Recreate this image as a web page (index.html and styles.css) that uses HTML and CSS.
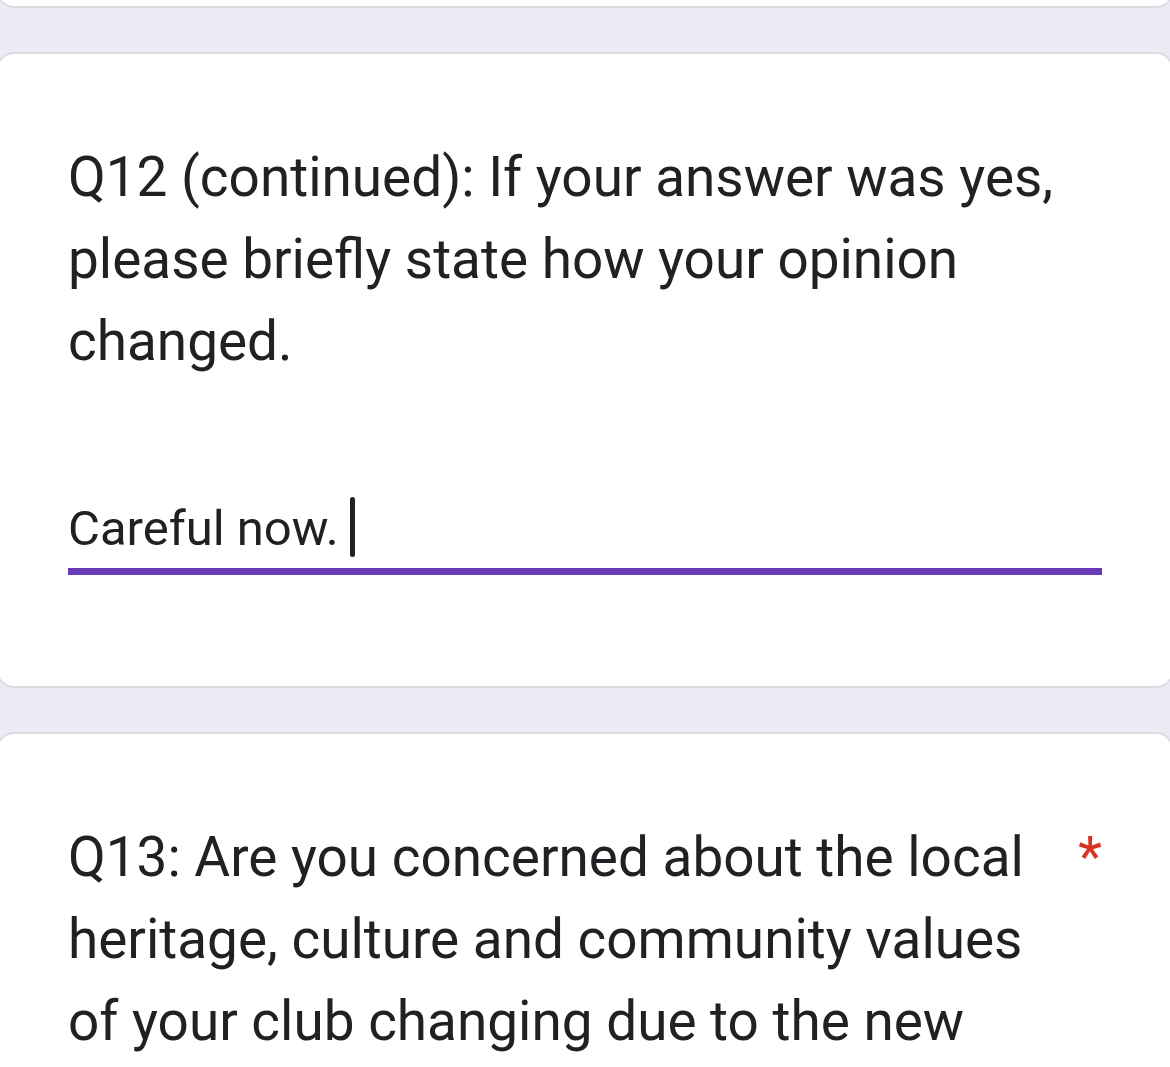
FILE: index.html
```html
<!DOCTYPE html>
<html>
<head>
<meta charset="utf-8">
<link rel="stylesheet" href="styles.css">
</head>
<body>
<div class="page">
  <div class="card card-stub"></div>
  <div class="card card-q12">
    <div class="title-row">
      <div class="title">Q12 (continued): If your answer was yes, please briefly state how your opinion changed.</div>
    </div>
    <div class="answer">
      <span class="answer-text">Careful now.</span><span class="caret"></span>
    </div>
    <div class="underline"></div>
  </div>
  <div class="card card-q13">
    <div class="title-row">
      <div class="title">Q13: Are you concerned about the local heritage, culture and community values of your club changing due to the new structure?</div>
      <span class="required">*</span>
    </div>
  </div>
</div>
</body>
</html>
```

FILE: styles.css
```css
html, body {
  margin: 0;
  padding: 0;
  height: 100%;
  overflow: hidden;
}
body {
  background: #ecebf5;
  font-family: Roboto, "Noto Sans", sans-serif;
  color: #202124;
}
.page {
  display: flex;
  flex-direction: column;
  gap: 44px;
  margin: 0 -4px;
}
.card {
  background: #ffffff;
  border: 2px solid #dcdce2;
  border-radius: 18px;
  box-sizing: border-box;
}
.card-stub {
  height: 60px;
  margin-top: -52px;
}
.card-q12 {
  height: 636px;
  padding: 82px 70px 0 70px;
}
.card-q13 {
  height: 500px;
  padding: 82px 70px 0 70px;
}
.title-row {
  display: flex;
  align-items: flex-start;
}
.title {
  flex: 1;
  font-size: 54.9px;
  line-height: 82px;
  max-width: 1000px;
}
.required {
  color: #d93025;
  font-size: 55px;
  line-height: 82px;
  margin-left: 41px;
}
.answer {
  display: flex;
  align-items: flex-end;
  margin-top: 114px;
  height: 72px;
  padding-bottom: 11px;
  box-sizing: border-box;
}
.answer-text {
  font-size: 49px;
  line-height: 58px;
  margin-bottom: -1px;
}
.caret {
  display: inline-block;
  width: 5px;
  height: 60px;
  background: #202124;
  border-radius: 3px;
  margin-left: 11px;
}
.underline {
  height: 7px;
  background: #673ab7;
}
```
